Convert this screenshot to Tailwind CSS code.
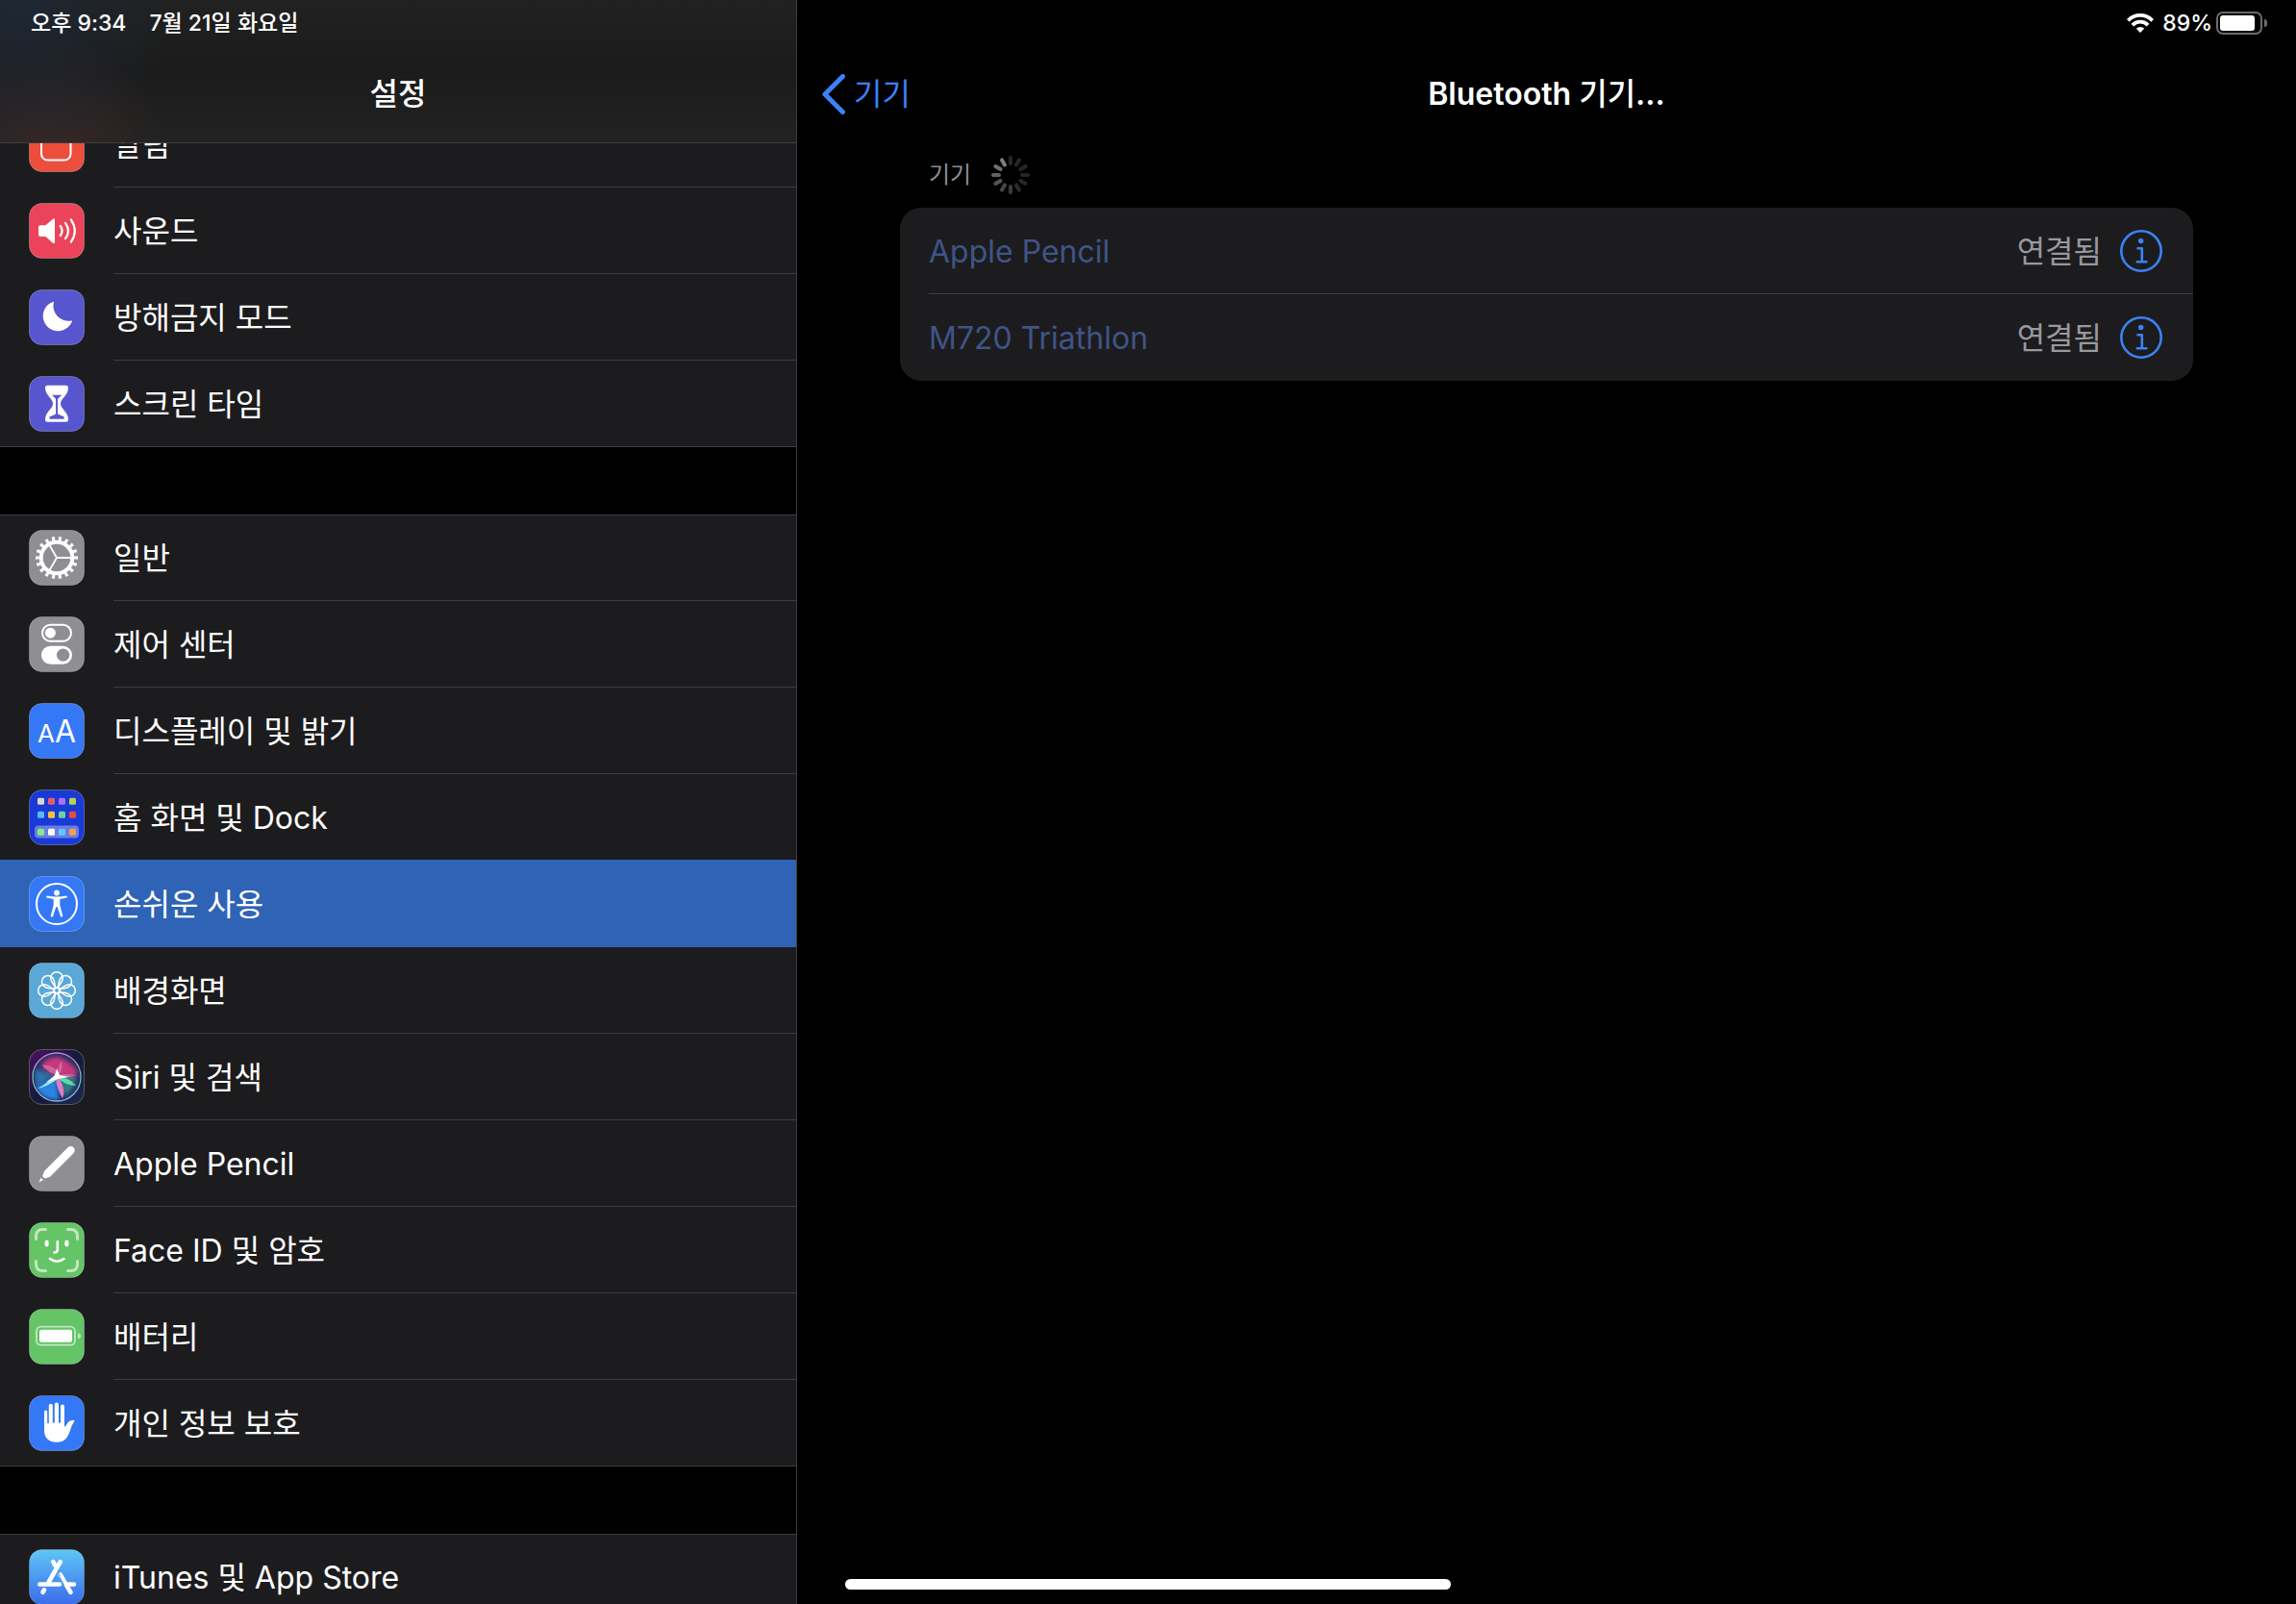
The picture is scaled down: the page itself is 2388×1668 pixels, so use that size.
<!DOCTYPE html>
<html lang="ko">
<head>
  <meta charset="UTF-8">
  <meta name="viewport" content="width=device-width, initial-scale=1.0">
  <title>설정 - Bluetooth 기기</title>
  <script src="https://cdn.jsdelivr.net/npm/@tailwindcss/browser@4"></script>
</head>
<body class="bg-black text-white font-[Inter,'Noto_Sans_CJK_KR',sans-serif] text-[32px] leading-10">
  <div class="relative flex h-screen overflow-hidden">

    <!-- Sidebar -->
    <aside class="relative w-[829px] shrink-0 overflow-hidden border-r border-[#3d3d41]">
      <header class="absolute inset-x-0 top-0 z-10 flex h-[149px] flex-col border-b border-[#3d3d41] bg-[#1e1e1e] bg-[radial-gradient(circle_at_20px_0px,#1e2733,transparent_160px),radial-gradient(circle_at_50px_170px,#3a2727,transparent_130px),linear-gradient(#212121,#1b1b1b_50%,#222222)]">
        <div class="flex h-12 items-center gap-6 pl-8 text-[23px] font-medium">
          <span>오후 9:34</span>
          <span>7월 21일 화요일</span>
        </div>
        <h1 class="flex h-[100px] items-center justify-center font-medium">설정</h1>
      </header>

      <nav class="flex flex-col gap-[70px] pt-[105px]">
        <!-- Group 1 -->
        <ul class="bg-[#1c1c1e] shadow-[inset_0_-1px_0_#3d3d41]">
          <li>
            <a href="#" class="flex h-[90px] items-center gap-[30px] pl-[30px]">
              <svg class="size-[58px] shrink-0" viewBox="0 0 58 58" fill="none">
                <rect x=".5" y=".5" width="57" height="57" rx="13" fill="#eb4e3d" stroke="#fff" stroke-opacity=".25"/>
                <rect x="13" y="14" width="30.5" height="31.5" rx="6.5" stroke="#fff" stroke-width="2"/>
              </svg>
              <span class="flex h-full flex-1 items-center border-b border-[#3d3d41] pt-0.5">알림</span>
            </a>
          </li>
          <li>
            <a href="#" class="flex h-[90px] items-center gap-[30px] pl-[30px]">
              <svg class="size-[58px] shrink-0" viewBox="0 0 58 58" fill="none">
                <rect x=".5" y=".5" width="57" height="57" rx="13" fill="#eb445a" stroke="#fff" stroke-opacity=".25"/>
                <path d="M12 23.3h5.5l7.5-6.6q2-1 2 1v23q0 2-2 1l-7.5-6.6H12q-2 0-2-2v-7.8q0-2 2-2z" fill="#fff"/>
                <path d="M32.800 24q3.600 5 0 10M38 20.800q6 8.200 0 16.400M43.800 17.300q8 11.700 0 23.400" stroke="#fff" stroke-width="2.200" stroke-linecap="round"/>
              </svg>
              <span class="flex h-full flex-1 items-center border-b border-[#3d3d41] pt-0.5">사운드</span>
            </a>
          </li>
          <li>
            <a href="#" class="flex h-[90px] items-center gap-[30px] pl-[30px]">
              <svg class="size-[58px] shrink-0" viewBox="0 0 58 58" fill="none">
                <rect x=".5" y=".5" width="57" height="57" rx="13" fill="#5856ce" stroke="#fff" stroke-opacity=".25"/>
                <path d="M24.8 12.9q1.6-.5 1 1.2a15.5 15.5 0 0 0 18 18.4q1.7-.3 1 1.3A15.7 15.7 0 1 1 24.8 12.9z" fill="#fff"/>
              </svg>
              <span class="flex h-full flex-1 items-center border-b border-[#3d3d41] pt-0.5">방해금지 모드</span>
            </a>
          </li>
          <li>
            <a href="#" class="flex h-[90px] items-center gap-[30px] pl-[30px]">
              <svg class="size-[58px] shrink-0" viewBox="0 0 58 58" fill="none">
                <rect x=".5" y=".5" width="57" height="57" rx="13" fill="#5856ce" stroke="#fff" stroke-opacity=".25"/>
                <path d="M19.5 9.7h19q2.5 0 2.500 2.5c0 8-8 11-8 16.500s8 8.500 8 16.500q0 2.500-2.500 2.500h-19q-2.500 0-2.500-2.500c0-8 8-11 8-16.500s-8-8.500-8-16.500q0-2.500 2.500-2.500z" fill="#fff"/>
                <path d="M24 19.7h10.3l-4.2 4v15.8q3 1.6 6.4 2.7.8 2.6-.8 2.6H22.5q-1.6 0-.8-2.6 3.4-1.1 6.4-2.7V23.7z" fill="#5856ce"/>
              </svg>
              <span class="flex h-full flex-1 items-center pt-0.5">스크린 타임</span>
            </a>
          </li>
        </ul>

        <!-- Group 2 -->
        <ul class="bg-[#1c1c1e] shadow-[inset_0_1px_0_#3d3d41,inset_0_-1px_0_#3d3d41]">
          <li>
            <a href="#" class="flex h-[90px] items-center gap-[30px] pl-[30px]">
              <svg class="size-[58px] shrink-0" viewBox="0 0 58 58" fill="none">
                <rect x=".5" y=".5" width="57" height="57" rx="13" fill="#8e8e93" stroke="#fff" stroke-opacity=".25"/>
                <g stroke="#fff">
                  <circle cx="29" cy="29" r="16.3" stroke-width="4"/>
                  <circle cx="29" cy="29" r="19.8" stroke-width="4.4" pathLength="180" stroke-dasharray="4.5 5.5" stroke-dashoffset="2.25"/>
                  <path d="M29 29h15M29 29l-7.5-13M29 29l-7.500 13" stroke-width="1.8"/>
                </g>
              </svg>
              <span class="flex h-full flex-1 items-center border-b border-[#3d3d41] pt-0.5">일반</span>
            </a>
          </li>
          <li>
            <a href="#" class="flex h-[90px] items-center gap-[30px] pl-[30px]">
              <svg class="size-[58px] shrink-0" viewBox="0 0 58 58" fill="none">
                <rect x=".5" y=".5" width="57" height="57" rx="13" fill="#8e8e93" stroke="#fff" stroke-opacity=".25"/>
                <rect x="14" y="8.7" width="30" height="17" rx="8.5" stroke="#fff" stroke-width="2"/>
                <circle cx="22.4" cy="17.2" r="5.5" fill="#fff"/>
                <rect x="13" y="30.7" width="32" height="19" rx="9.5" fill="#fff"/>
                <circle cx="35.6" cy="40.2" r="6.6" fill="#8e8e93"/>
              </svg>
              <span class="flex h-full flex-1 items-center border-b border-[#3d3d41] pt-0.5">제어 센터</span>
            </a>
          </li>
          <li>
            <a href="#" class="flex h-[90px] items-center gap-[30px] pl-[30px]">
              <svg class="size-[58px] shrink-0" viewBox="0 0 58 58" fill="none">
                <rect x=".5" y=".5" width="57" height="57" rx="13" fill="#3478f6" stroke="#fff" stroke-opacity=".25"/>
                <g fill="#fff" text-anchor="middle">
                  <text x="18" y="41" font-size="26">A</text>
                  <text x="38" y="41" font-size="32">A</text>
                </g>
              </svg>
              <span class="flex h-full flex-1 items-center border-b border-[#3d3d41] pt-0.5">디스플레이 및 밝기</span>
            </a>
          </li>
          <li>
            <a href="#" class="flex h-[90px] items-center gap-[30px] pl-[30px]">
              <svg class="size-[58px] shrink-0" viewBox="0 0 58 58" fill="none">
                <rect x=".5" y=".5" width="57" height="57" rx="13" fill="#1a3ad6" stroke="#fff" stroke-opacity=".25"/>
                <rect x="6" y="37.5" width="46" height="13" rx="4" fill="#fff" fill-opacity=".35"/>
                <rect x="9" y="8.7" width="7" height="7" rx="1.5" fill="#d8d8d2"/>
                <rect x="20" y="8.7" width="7" height="7" rx="1.5" fill="#ea5a6e"/>
                <rect x="31" y="8.7" width="7" height="7" rx="1.5" fill="#b070f4"/>
                <rect x="42" y="8.7" width="7" height="7" rx="1.5" fill="#b8d44c"/>
                <rect x="9" y="22.7" width="7" height="7" rx="1.5" fill="#5ab8f8"/>
                <rect x="20" y="22.7" width="7" height="7" rx="1.5" fill="#f8c03c"/>
                <rect x="31" y="22.7" width="7" height="7" rx="1.5" fill="#6cd0a4"/>
                <rect x="42" y="22.7" width="7" height="7" rx="1.5" fill="#e84c3c"/>
                <rect x="9" y="40.7" width="7" height="7" rx="1.5" fill="#84ec7c"/>
                <rect x="20" y="40.7" width="7" height="7" rx="1.5" fill="#fff"/>
                <rect x="31" y="40.7" width="7" height="7" rx="1.5" fill="#60c8fc"/>
                <rect x="42" y="40.7" width="7" height="7" rx="1.5" fill="#f4a050"/>
              </svg>
              <span class="flex h-full flex-1 items-center pt-0.5">홈 화면 및 Dock</span>
            </a>
          </li>
          <li class="-mt-px bg-[#2e63b6] pt-px">
            <a href="#" aria-current="page" class="flex h-[90px] items-center gap-[30px] pl-[30px]">
              <svg class="size-[58px] shrink-0" viewBox="0 0 58 58" fill="none">
                <rect x=".5" y=".5" width="57" height="57" rx="13" fill="#3478f6" stroke="#fff" stroke-opacity=".25"/>
                <circle cx="29" cy="29" r="21" stroke="#fff" stroke-width="2"/>
                <circle cx="29" cy="17.5" r="2.9" fill="#fff"/>
                <path d="M18.8 20.6q10.2 1.8 20.4 0 1.4.7.3 2l-7.2 1.5v6l3 11.5q-.8 1.7-2.2.6L29.600 32h-1.200l-3.500 10.200q-1.400 1.100-2.200-.6l3-11.500v-6l-7.200-1.500q-1.100-1.300.3-2z" fill="#fff"/>
              </svg>
              <span class="flex h-full flex-1 items-center pt-0.5">손쉬운 사용</span>
            </a>
          </li>
          <li>
            <a href="#" class="flex h-[90px] items-center gap-[30px] pl-[30px]">
              <svg class="size-[58px] shrink-0" viewBox="0 0 58 58" fill="none">
                <defs>
                  <path id="petal" d="M0-2.500C-3.500-6-6.300-9-6.300-13a6.300 6.300 0 0 1 12.600 0C6.300-9 3.500-6 0-2.500z"/>
                </defs>
                <rect x=".5" y=".5" width="57" height="57" rx="13" fill="#59a8d8" stroke="#fff" stroke-opacity=".25"/>
                <g transform="translate(29 29)" stroke="#fff" stroke-width="1.5">
                  <use href="#petal"/>
                  <use href="#petal" transform="rotate(45)"/>
                  <use href="#petal" transform="rotate(90)"/>
                  <use href="#petal" transform="rotate(135)"/>
                  <use href="#petal" transform="rotate(180)"/>
                  <use href="#petal" transform="rotate(225)"/>
                  <use href="#petal" transform="rotate(270)"/>
                  <use href="#petal" transform="rotate(315)"/>
                  <circle r="3.2"/>
                </g>
              </svg>
              <span class="flex h-full flex-1 items-center border-b border-[#3d3d41] pt-0.5">배경화면</span>
            </a>
          </li>
          <li>
            <a href="#" class="flex h-[90px] items-center gap-[30px] pl-[30px]">
              <svg class="size-[58px] shrink-0" viewBox="0 0 58 58" fill="none">
                <defs>
                  <linearGradient id="siri-bg" x1="0" y1="0" x2="1" y2="1">
                    <stop stop-color="#4d0f66"/>
                    <stop offset=".5" stop-color="#16193a"/>
                    <stop offset="1" stop-color="#1c2a50"/>
                  </linearGradient>
                  <linearGradient id="siri-ring" x1="0" y1="0" x2="0" y2="1">
                    <stop stop-color="#b48ad0"/>
                    <stop offset=".5" stop-color="#6ec6a8"/>
                    <stop offset="1" stop-color="#86b8e8"/>
                  </linearGradient>
                  <clipPath id="siri-clip"><circle cx="29" cy="29" r="24"/></clipPath>
                  <filter id="siri-blur" x="-50%" y="-50%" width="200%" height="200%"><feGaussianBlur stdDeviation="2"/></filter>
                  <filter id="siri-glow" x="-50%" y="-50%" width="200%" height="200%"><feGaussianBlur stdDeviation=".7"/></filter>
                </defs>
                <rect x=".5" y=".5" width="57" height="57" rx="13" fill="url(#siri-bg)" stroke="#fff" stroke-opacity=".25"/>
                <g clip-path="url(#siri-clip)">
                  <circle cx="29" cy="29" r="24" fill="#2a3068"/>
                  <g filter="url(#siri-blur)">
                    <path d="M13 16q16-18 37 6v5q-18 3-21 0-12-4-16-11z" fill="#c8387c"/>
                    <path d="M29 29L7 40q8 14 24 13z" fill="#2c84e0"/>
                    <path d="M6 20l20 8-19 11z" fill="#2a74ac"/>
                    <path d="M31 29h18q0 12-12 20z" fill="#2f7c86"/>
                  </g>
                  <g filter="url(#siri-glow)">
                    <path d="M28 27Q15 21 14 16q14 1 16 10 1-10 4-14 2 10-3 15 9-2 18 0-8 3-17 3z" fill="#e088c0" fill-opacity=".55"/>
                    <path d="M28 26Q20 35 9 41q10-2 21-10z" fill="#8eeaf8"/>
                    <path d="M29 29q13 0 20 9-10 0-18-7z" fill="#58dca8"/>
                    <path d="M28 30q1 12 7 21 4-8-3-20z" fill="#e07cc0"/>
                    <path d="M29 20l3 7 10 2-10 1.500-3 1-11 3 9-7z" fill="#fff"/>
                  </g>
                </g>
                <circle cx="29" cy="29" r="25" stroke="url(#siri-ring)" stroke-width="1.3"/>
              </svg>
              <span class="flex h-full flex-1 items-center border-b border-[#3d3d41] pt-0.5">Siri 및 검색</span>
            </a>
          </li>
          <li>
            <a href="#" class="flex h-[90px] items-center gap-[30px] pl-[30px]">
              <svg class="size-[58px] shrink-0" viewBox="0 0 58 58" fill="none">
                <rect x=".5" y=".5" width="57" height="57" rx="13" fill="#8e8e93" stroke="#fff" stroke-opacity=".25"/>
                <g transform="translate(10.3 48.5) rotate(45)" fill="#fff">
                  <path d="M-2-7.5L-4.2-12.5V-47a4.2 4.2 0 0 1 8.4 0V-12.5L2-7.5q-2 1.2-4 0z"/>
                  <path d="M0 0L-1.7-5.2q1.7 1 3.4 0z"/>
                </g>
              </svg>
              <span class="flex h-full flex-1 items-center border-b border-[#3d3d41] pt-0.5">Apple Pencil</span>
            </a>
          </li>
          <li>
            <a href="#" class="flex h-[90px] items-center gap-[30px] pl-[30px]">
              <svg class="size-[58px] shrink-0" viewBox="0 0 58 58" fill="none">
                <rect x=".5" y=".5" width="57" height="57" rx="13" fill="#65c466" stroke="#fff" stroke-opacity=".25"/>
                <g stroke="#fff" stroke-linecap="round">
                  <path d="M7.500 17.500v-3q0-7 7-7h3M40.500 7.500h3q7 0 7 7v3M50.500 40.500v3q0 7-7 7h-3M17.500 50.500h-3q-7 0-7-7v-3" stroke-width="3" stroke-opacity=".6"/>
                  <path d="M18.600 20.500v3M39.400 20.500v3" stroke-width="4"/>
                  <path d="M29.800 20.300v8.200q0 3-3.300 3M22 38q7 5.500 14.500 0" stroke-width="2.6"/>
                </g>
              </svg>
              <span class="flex h-full flex-1 items-center border-b border-[#3d3d41] pt-0.5">Face ID 및 암호</span>
            </a>
          </li>
          <li>
            <a href="#" class="flex h-[90px] items-center gap-[30px] pl-[30px]">
              <svg class="size-[58px] shrink-0" viewBox="0 0 58 58" fill="none">
                <rect x=".5" y=".5" width="57" height="57" rx="13" fill="#65c466" stroke="#fff" stroke-opacity=".25"/>
                <rect x="8" y="18.7" width="40" height="19" rx="4.5" stroke="#fff" stroke-opacity=".6" stroke-width="1.8"/>
                <rect x="11" y="21.7" width="34" height="13" rx="2" fill="#fff"/>
                <path d="M51 25q3 1 3 3.300t-3 3.300z" fill="#fff" fill-opacity=".6"/>
              </svg>
              <span class="flex h-full flex-1 items-center border-b border-[#3d3d41] pt-0.5">배터리</span>
            </a>
          </li>
          <li>
            <a href="#" class="flex h-[90px] items-center gap-[30px] pl-[30px]">
              <svg class="size-[58px] shrink-0" viewBox="0 0 58 58" fill="none">
                <rect x=".5" y=".5" width="57" height="57" rx="13" fill="#3478f6" stroke="#fff" stroke-opacity=".25"/>
                <path d="M16 17.200a1.600 1.600 0 0 1 3.200 0V29h1.600V10.800a2 2 0 0 1 4 0V28.500h2V9.700a2.100 2.100 0 0 1 4.200 0V28.500h2V11.600a2 2 0 0 1 4 0V32.500q1.200 0 2.500-2.500 1.600-4 7-4.300 1.500.3.500 1.800-2.200 2.800-3.700 8C40.500 44.500 37 48.800 29 48.800 20 48.800 16 43.500 16 37z" fill="#fff"/>
              </svg>
              <span class="flex h-full flex-1 items-center pt-0.5">개인 정보 보호</span>
            </a>
          </li>
        </ul>

        <!-- Group 3 -->
        <ul class="bg-[#1c1c1e] shadow-[inset_0_1px_0_#3d3d41]">
          <li>
            <a href="#" class="flex h-[90px] items-center gap-[30px] pl-[30px]">
              <svg class="size-[58px] shrink-0" viewBox="0 0 58 58" fill="none">
                <defs>
                  <linearGradient id="store-bg" x1="0" y1="0" x2="0" y2="1">
                    <stop stop-color="#5fc6f7"/>
                    <stop offset="1" stop-color="#3a6cea"/>
                  </linearGradient>
                </defs>
                <rect x=".5" y=".5" width="57" height="57" rx="13" fill="url(#store-bg)" stroke="#fff" stroke-opacity=".2"/>
                <path d="M32.700 13.200L20.500 34.500M16 42.300l-1.500 2.500M25.300 13.200l2.200 3.800M32.700 26.500L43.500 44.800M11.300 36.500H32M41 36.500h6" stroke="#fff" stroke-width="4.6" stroke-linecap="round"/>
                <path d="M30.500 21.500q.4 6.500 6 15.500" stroke="#4c98f0"/>
              </svg>
              <span class="flex h-full flex-1 items-center pt-0.5">iTunes 및 App Store</span>
            </a>
          </li>
        </ul>
      </nav>
    </aside>

    <!-- Detail -->
    <main class="min-w-0 flex-1">
      <div class="flex h-12 items-center justify-end pr-[30px] text-[23px] font-medium">
        <svg class="mr-[9px] h-5 w-7" viewBox="0 0 28 20" fill="none" aria-label="Wi-Fi">
          <path d="M1.300 7.300a17.800 17.800 0 0 1 25.400 0M5.900 12.100a11.300 11.300 0 0 1 16.200 0" stroke="#fff" stroke-width="3.8"/>
          <path d="M14 20l-4.200-4.300a6 6 0 0 1 8.400 0z" fill="#fff"/>
        </svg>
        <span>89%</span>
        <div class="ml-1 h-6 w-12 rounded-[7px] border-2 border-[#6b6b6b] p-0.5">
          <div class="h-full w-9 rounded-[3px] bg-white"></div>
        </div>
        <div class="ml-0.5 h-2 w-[3px] rounded-r-full bg-[#6b6b6b]"></div>
      </div>

      <header class="grid h-[100px] grid-cols-[1fr_auto_1fr] items-center">
        <a href="#" class="flex items-center gap-[9px] pl-[26px] text-[#3b82f7]">
          <svg class="h-[42px] w-6" viewBox="0 0 24 42" fill="none">
            <path d="M21.500 2.500L3 21l18.500 18.500" stroke="currentColor" stroke-width="5" stroke-linecap="round" stroke-linejoin="round"/>
          </svg>
          기기
        </a>
        <h2 class="font-semibold">Bluetooth <span class="font-medium">기기</span>...</h2>
      </header>

      <section class="px-[107px]">
        <div class="flex h-[68px] items-center gap-[21px] pl-[30px] text-2xl text-[#8d8d93]">
          <h3>기기</h3>
          <svg class="size-10" viewBox="-20 -20 40 40" stroke-width="4" stroke-linecap="round">
            <path d="M0-12V-18" stroke="#262627"/>
            <path d="M0-12V-18" stroke="#262627" transform="rotate(30)"/>
            <path d="M0-12V-18" stroke="#262627" transform="rotate(60)"/>
            <path d="M0-12V-18" stroke="#262627" transform="rotate(90)"/>
            <path d="M0-12V-18" stroke="#262627" transform="rotate(120)"/>
            <path d="M0-12V-18" stroke="#2c2c2d" transform="rotate(150)"/>
            <path d="M0-12V-18" stroke="#3a3a3b" transform="rotate(180)"/>
            <path d="M0-12V-18" stroke="#474748" transform="rotate(210)"/>
            <path d="M0-12V-18" stroke="#545455" transform="rotate(240)"/>
            <path d="M0-12V-18" stroke="#626264" transform="rotate(270)"/>
            <path d="M0-12V-18" stroke="#707072" transform="rotate(300)"/>
            <path d="M0-12V-18" stroke="#7e7e81" transform="rotate(330)"/>
          </svg>
        </div>

        <ul class="rounded-[22px] bg-[#1c1c1e] pl-[30px]">
          <li class="flex h-[90px] items-center border-b border-[#3d3d41] pr-8">
            <span class="flex-1 pt-0.5 text-[#3f5487]">Apple Pencil</span>
            <span class="mr-[19px] pt-0.5 text-[#98989f]">연결됨</span>
            <button type="button" aria-label="Apple Pencil 정보" class="text-[#3b82f7]">
              <svg class="size-11" viewBox="0 0 44 44" fill="none" stroke="currentColor">
                <circle cx="22" cy="22" r="20.7" stroke-width="2.6"/>
                <circle cx="21.7" cy="11.5" r="2.7" fill="currentColor" stroke="none"/>
                <path d="M18.500 19.200h4.300v14M17.800 33.200h9.600" stroke-width="2.6" stroke-linecap="round" stroke-linejoin="round"/>
              </svg>
            </button>
          </li>
          <li class="flex h-[90px] items-center pr-8">
            <span class="flex-1 pt-0.5 text-[#3f5487]">M720 Triathlon</span>
            <span class="mr-[19px] pt-0.5 text-[#98989f]">연결됨</span>
            <button type="button" aria-label="M720 Triathlon 정보" class="text-[#3b82f7]">
              <svg class="size-11" viewBox="0 0 44 44" fill="none" stroke="currentColor">
                <circle cx="22" cy="22" r="20.7" stroke-width="2.6"/>
                <circle cx="21.7" cy="11.5" r="2.7" fill="currentColor" stroke="none"/>
                <path d="M18.500 19.200h4.300v14M17.800 33.200h9.600" stroke-width="2.6" stroke-linecap="round" stroke-linejoin="round"/>
              </svg>
            </button>
          </li>
        </ul>
      </section>
    </main>

    <!-- Home indicator -->
    <div class="absolute bottom-[15px] left-1/2 z-20 h-[11px] w-[630px] -translate-x-1/2 rounded-full bg-white"></div>
  </div>
</body>
</html>
